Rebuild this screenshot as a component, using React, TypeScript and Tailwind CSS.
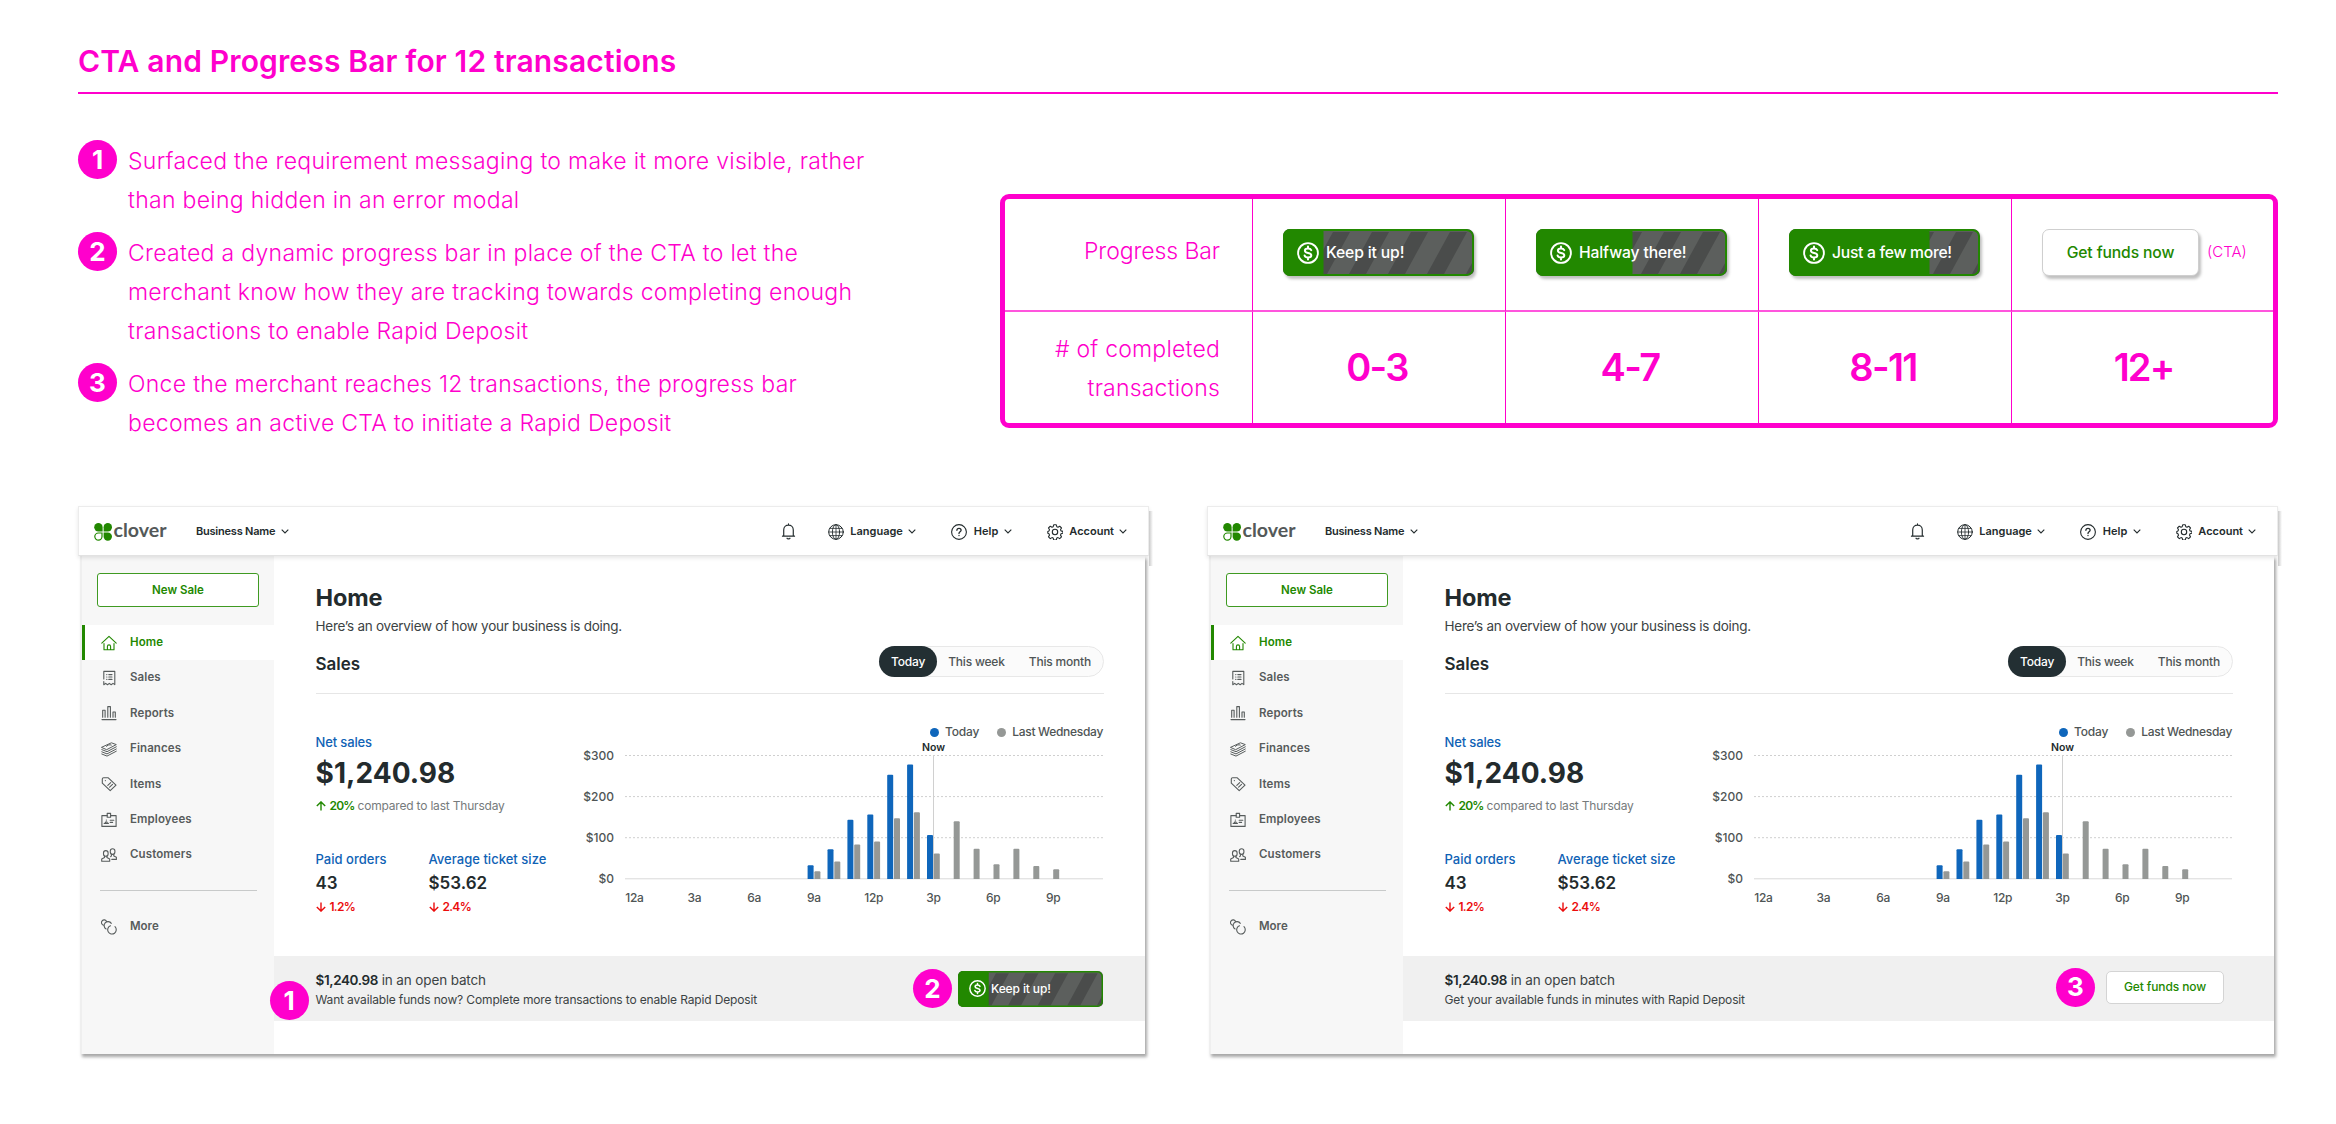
import type { ReactNode } from 'react';

type Variant = 'progress' | 'cta';

const annotations = [
  ['Surfaced the requirement messaging to make it more visible, rather', 'than being hidden in an error modal'],
  [
    'Created a dynamic progress bar in place of the CTA to let the',
    'merchant know how they are tracking towards completing enough',
    'transactions to enable Rapid Deposit',
  ],
  ['Once the merchant reaches 12 transactions, the progress bar', 'becomes an active CTA to initiate a Rapid Deposit'],
];

const progressSteps = [
  { label: 'Keep it up!', range: '0-3', fill: 40.5, tracking: 'tracking-[-0.009em]' },
  { label: 'Halfway there!', range: '4-7', fill: 96.5, tracking: 'tracking-[-0.009em]' },
  { label: 'Just a few more!', range: '8-11', fill: 140.5, tracking: 'tracking-[-0.018em]' },
];

// Heights in px on a $300 = 123px scale, one slot per hour starting at 9a
const hourlySales = [
  { today: 13.8, last: 7.8 },
  { today: 29.8, last: 17.5 },
  { today: 59.2, last: 34.4 },
  { today: 64.4, last: 37.4 },
  { today: 104.2, last: 60.8 },
  { today: 114.5, last: 66.8 },
  { today: 43.9, last: 25.5 },
  { today: 0, last: 57.8 },
  { today: 0, last: 30.2 },
  { today: 0, last: 14.8 },
  { today: 0, last: 30.2 },
  { today: 0, last: 13.1 },
  { today: 0, last: 9.8 },
];

const hourLabels = ['12a', '3a', '6a', '9a', '12p', '3p', '6p', '9p'];

function Icon({ children, size = 16 }: { children: ReactNode; size?: number }) {
  return (
    <svg
      width={size}
      height={size}
      viewBox="0 0 16 16"
      fill="none"
      stroke="currentColor"
      strokeWidth="1.1"
      strokeLinecap="round"
      strokeLinejoin="round"
      className="shrink-0"
    >
      {children}
    </svg>
  );
}

const navItems: { label: string; icon: ReactNode }[] = [
  {
    label: 'Home',
    icon: (
      <>
        <path d="M.8 8.2 8 1.3l7.2 6.9" />
        <path d="M3 8.5v6.3h10V8.5M6.4 14.6v-3.1a1.6 1.6 0 0 1 3.2 0v3.1" />
      </>
    ),
  },
  {
    label: 'Sales',
    icon: (
      <>
        <path d="M2.8 9V1.4h11v13.2l-1.8-1.2-1.8 1.3-1.9-1.3-1.8 1.3-1.8-1.3-1.9 1.3v-3.2" />
        <path d="M5.7 4.6h.2M7.8 4.6H11M5.7 7h.2M7.8 7H11M5.7 9.4h.2M7.8 9.4H11" />
      </>
    ),
  },
  {
    label: 'Reports',
    icon: (
      <>
        <path d="M1 14.6h14" />
        <path d="M1.7 12.3V5.2h2.4v7.1M6.8 12.3V1.6h2.6v10.7M12 12.3V7h2.3v5.3" />
      </>
    ),
  },
  {
    label: 'Finances',
    icon: (
      <g strokeWidth="1">
        <path d="M.8 6.2 10.4 1.8l4.9 1.8-9.3 4.9z" />
        <path d="M5.5 5.4c.2-1.2 3.2-2.2 4.8-1.4" />
        <path d="m.8 8.6 5.2 2.1 9.3-4.9M.8 10.8 6 12.9 15.3 8M.8 13 6 15.100l9.3-4.900" />
      </g>
    ),
  },
  {
    label: 'Items',
    icon: (
      <>
        <path d="M1.3 3v4.2l7.9 7.5 5.8-5.6-7.7-7.3H2.6A1.3 1.3 0 0 0 1.3 3z" />
        <path d="M4.3 4.6h.1M6.8 9.4l2.9-2.8M8.6 11.2 11.5 8.4" />
      </>
    ),
  },
  {
    label: 'Employees',
    icon: (
      <>
        <path d="M6.2 3.6H.9v10.8h14.2V3.6H9.8" />
        <path d="M6.2 1.4h3.4v3.8H6.2zM9.2 8.2h3.6M9.2 10.4h2.4" />
        <path d="M3.2 11.4h4.2M4.3 11c0-1 .3-1.2 1-1.2s1 .2 1 1.2M5.3 8.1h.1" />
      </>
    ),
  },
  {
    label: 'Customers',
    icon: (
      <>
        <rect x="2.5" y="3.6" width="4.6" height="5.6" rx="2.3" />
        <path d="M3.6 9v1.6L.7 12v2.2h8V12l-2.8-1.4V9" />
        <rect x="9.3" y="1.8" width="4.6" height="5.6" rx="2.3" />
        <path d="M10.4 7.4V9l-.8.6M12.8 7.4V9l2.6 1.2v2.2h-4.6" />
      </>
    ),
  },
];

const moreIcon = (
  <>
    <path d="M2.6 6.2A2.7 2.7 0 1 1 5.7 2.6" />
    <path d="M5.1 9.9A3.9 3.9 0 1 1 10.3 4.4" />
    <path d="M14 7.7A4.3 4.3 0 1 1 9.5 6.7" />
  </>
);

function Chevron() {
  return (
    <svg width="8" height="5" viewBox="0 0 8 5" fill="none" stroke="currentColor" strokeWidth="1.1" className="shrink-0">
      <path d="M.7.6 4 4 7.3.6" />
    </svg>
  );
}

function Arrow({ down = false }: { down?: boolean }) {
  return (
    <svg width="10" height="10" viewBox="0 0 10 10" fill="none" stroke="currentColor" strokeWidth="1.4" className="shrink-0">
      {down ? <path d="M5 .4v8.7M.8 5 5 9.1 9.2 5" /> : <path d="M5 9.6V.9M.8 5 5 .9 9.2 5" />}
    </svg>
  );
}

function Badge({ n }: { n: number }) {
  return (
    <span className="flex size-[39px] shrink-0 items-center justify-center rounded-full bg-[#ff00cc] text-[26px] leading-none font-bold text-white">
      {n}
    </span>
  );
}

function DollarIcon({ className }: { className: string }) {
  return (
    <svg viewBox="0 0 22 22" fill="none" stroke="currentColor" strokeLinecap="round" className={className}>
      <circle cx="11" cy="11" r="9.9" strokeWidth="1.9" />
      <path
        d="M14.2 8.2c-.5-1.1-1.7-1.7-3.2-1.7-1.8 0-3.1.8-3.1 2.2 0 3.2 6.4 1.4 6.4 4.6 0 1.4-1.5 2.2-3.3 2.2-1.7 0-3-.7-3.4-2M11 4.6v1.9M11 15.5v1.9"
        strokeWidth="2"
      />
    </svg>
  );
}

// Striped track with the completed share filled in green
function ProgressTrack({ fill }: { fill: number }) {
  return (
    <svg viewBox="0 0 191 47" preserveAspectRatio="none" className="absolute inset-0 h-full w-full">
      <rect width="191" height="47" fill="#5c5f5d" />
      {[0, 1, 2, 3, 4].map((i) => {
        const x = 50 + i * 39;
        return <polygon key={i} points={`${x},3 ${x + 17},3 ${x - 6},45 ${x - 23},45`} fill="#4a4c4b" />;
      })}
      <rect x="-6" width={fill + 6} height="47" rx="3" fill="#228800" />
      <rect x="1" y="1" width="189" height="45" rx="6.5" fill="none" stroke="#228800" strokeWidth="2" />
    </svg>
  );
}

function ComparisonTable() {
  return (
    <div className="mt-[100px] grid h-[234px] w-[1278px] grid-cols-[248px_253px_253px_253px_1fr] grid-rows-[113px_1fr] rounded-[9px] border-5 border-[#ff00cc] text-[#ff00cc]">
      <div className="border-r border-b-2 border-r-[#ff00cc] border-b-[#ff55dd] pt-[33px] pr-[32px] text-right text-[23px] leading-[39px] font-light tracking-[-0.004em]">
        Progress Bar
      </div>
      {progressSteps.map((step) => (
        <div key={step.range} className="border-r border-b-2 border-r-[#ff00cc] border-b-[#ff55dd] pt-[30px] pl-[30px]">
          <div className="relative flex h-[47px] w-[191px] items-center gap-[7px] overflow-hidden rounded-[7px] pl-[14px] text-white shadow-[2px_3px_3px_rgba(0,0,0,0.25)]">
            <ProgressTrack fill={step.fill} />
            <DollarIcon className="relative size-[22px]" />
            <span className={`relative text-[15.7px] font-medium whitespace-nowrap ${step.tracking}`}>{step.label}</span>
          </div>
        </div>
      ))}
      <div className="flex items-start gap-2 border-b-2 border-[#ff55dd] pt-[30px] pl-[30px]">
        <div className="flex h-[47px] w-[157px] items-center justify-center rounded-[7px] border border-[#cfcfcf] bg-white text-[15.7px] font-medium tracking-[-0.008em] whitespace-nowrap text-[#228800] shadow-[2px_3px_3px_rgba(0,0,0,0.25)]">
          Get funds now
        </div>
        <span className="text-[15px] leading-[46px] font-light">(CTA)</span>
      </div>
      <div className="border-r border-[#ff00cc] pt-[18px] pr-[32px] text-right text-[23px] leading-[39px] font-light tracking-[0.009em]">
        # of completed
        <br />
        transactions
      </div>
      {progressSteps.map((step) => (
        <div
          key={step.range}
          className="flex items-center justify-center border-r border-[#ff00cc] pr-[4px] text-[38px] font-semibold tracking-[-0.045em]"
        >
          {step.range}
        </div>
      ))}
      <div className="flex items-center justify-center text-[38px] font-semibold tracking-[-0.05em]">
        <span className="pl-[2px]">12+</span>
      </div>
    </div>
  );
}

function Logo() {
  return (
    <svg width="76" height="28" viewBox="0 -4 76 28" className="shrink-0 overflow-visible">
      <g fill="#228800">
        <path d="M4.4 1A4.2 4.2 0 0 0 4.4 9.4H8.600V5.200A4.200 4.200 0 0 0 4.400 1z" />
        <path d="M13.800 1A4.200 4.200 0 0 1 13.800 9.400H9.600V5.200A4.200 4.200 0 0 1 13.800 1z" />
        <path d="M13.800 18.800A4.200 4.200 0 0 0 13.800 10.400H9.600V14.600A4.200 4.200 0 0 0 13.800 18.800z" />
      </g>
      <path d="M4.400 18.200A3.600 3.600 0 0 1 4.400 11H8V14.600A3.600 3.600 0 0 1 4.400 18.200z" fill="none" stroke="#228800" strokeWidth="1.2" />
      <text x="19.5" y="15" textLength="53" lengthAdjust="spacingAndGlyphs" fill="#545959" className="font-[Lato] text-[19.5px] font-bold">
        clover
      </text>
    </svg>
  );
}

function TopBar() {
  return (
    <header className="relative z-10 flex h-[50px] items-center border border-[#ececec] border-b-[#e2e2e2] bg-white pt-px pr-[21px] pl-[15px] text-[11px] leading-none font-semibold text-[#232b2d] shadow-[0_2px_4px_rgba(0,0,0,0.1)]">
      <Logo />
      <div className="ml-[26px] flex items-center gap-[6px] tracking-[-0.02em]">
        Business Name
        <Chevron />
      </div>
      <div className="ml-auto flex items-center">
        <Icon size={17}>
          <path d="M2.3 12.4h11.4M3.5 12.4V6.5C3.5 3.8 5.5 2 8 2s4.500 1.800 4.500 4.500v5.900M8 2V.9M6.600 14.300c.3.9 2.500.9 2.800 0" />
        </Icon>
        <div className="ml-[31px] flex items-center">
          <Icon>
            <circle cx="8" cy="8" r="7.3" strokeWidth="1" />
            <ellipse cx="8" cy="8" rx="3.6" ry="7.3" strokeWidth=".9" />
            <path d="M8 .8v14.4M.8 8h14.4M1.8 4.4h12.4M1.8 11.6h12.4" strokeWidth=".8" />
          </Icon>
          <span className="mr-[5px] ml-[6px]">Language</span>
          <Chevron />
        </div>
        <div className="ml-[35px] flex items-center">
          <Icon>
            <circle cx="8" cy="8" r="7.4" />
            <path d="M5.9 6.3c0-1.2.9-2 2.1-2s2.1.8 2.1 1.9c0 1.5-2.1 1.6-2.1 3.2M8 11.5v.1" strokeWidth="1.3" />
          </Icon>
          <span className="mr-[6px] ml-[7px]">Help</span>
          <Chevron />
        </div>
        <div className="ml-[35px] flex items-center">
          <Icon>
            <circle cx="8" cy="8" r="2.7" />
            <path d="M6.7.8h2.600l.5 1.900 1.200.5 1.700-1 1.800 1.800-1 1.700.5 1.200 1.900.5v1.900l-1.900.5-.5 1.300 1 1.700-1.800 1.800-1.700-1-1.200.5-.5 1.900H6.700l-.5-1.900-1.200-.5-1.700 1-1.800-1.800 1-1.700-.5-1.300L.8 9.300V7.400l1.200-.5.5-1.200-1-1.700 1.800-1.800 1.700 1 1.200-.5z" />
          </Icon>
          <span className="mr-[5px] ml-[6px]">Account</span>
          <Chevron />
        </div>
      </div>
      <div className="absolute top-1 -right-[5px] h-[55px] w-1 bg-gradient-to-r from-[#c9c9c9] to-white" />
    </header>
  );
}

function Sidebar() {
  return (
    <aside className="w-[191.5px] shrink-0 bg-[#f7f7f7] pt-[17px] text-[11.5px] font-semibold text-[#575c5c]">
      <div className="ml-[15px] flex h-[34px] w-[162px] items-center justify-center rounded-[3px] border border-[#3f9a22] bg-white pt-px text-[#228800]">
        New Sale
      </div>
      <nav className="mt-[18px]">
        {navItems.map((item, i) => (
          <div
            key={item.label}
            className={`flex h-[35.4px] items-center gap-3 border-l-[3px] pl-4 tracking-[0.010em] ${
              i === 0 ? 'border-[#228800] bg-white text-[#228800]' : 'border-transparent'
            }`}
          >
            <Icon>{item.icon}</Icon>
            <span className="pl-px">{item.label}</span>
          </div>
        ))}
      </nav>
      <div className="mt-[17px] mr-[17px] ml-[18px] border-t border-[#c8caca]" />
      <div className="mt-[18px] flex h-[36px] items-center gap-3 pl-[19px]">
        <Icon>{moreIcon}</Icon>
        <span className="pl-px">More</span>
      </div>
    </aside>
  );
}

function SalesChart() {
  return (
    <svg width="521" height="166" viewBox="583 743 521 166" className="block font-[Inter] text-[12px] font-medium">
      {['$300', '$200', '$100', '$0'].map((label, i) => {
        const y = 756.5 + i * 41.1;
        return (
          <g key={label}>
            <text x="614" y={y + 4} textAnchor="end" fill="#4f5555">
              {label}
            </text>
            <line x1="625" x2="1103" y1={y} y2={y} stroke={i === 3 ? '#d9d9d9' : '#cfcfcf'} strokeDasharray={i === 3 ? undefined : '2 2'} />
          </g>
        );
      })}
      <line x1="933.5" x2="933.5" y1="756.5" y2="880" stroke="#d0d0d0" />
      <text x="933.5" y="752" textAnchor="middle" fill="#232b2d" className="text-[10.5px] font-semibold">
        Now
      </text>
      {hourlySales.map((hour, i) => {
        const x = 807.6 + i * 19.9;
        return (
          <g key={i}>
            {hour.today > 0 && (
              <path d={`M${x} 880v${-(hour.today - 1)}q0-1 1-1h4q1 0 1 1v${hour.today - 1}z`} fill="#0f66bb" />
            )}
            <path d={`M${x + 6.8} 880v${-(hour.last - 1)}q0-1 1-1h4q1 0 1 1v${hour.last - 1}z`} fill="#959896" />
          </g>
        );
      })}
      {hourLabels.map((label, i) => (
        <text key={label} x={634.5 + i * 59.8} y="902.5" textAnchor="middle" fill="#4f5555" letterSpacing="-0.3">
          {label}
        </text>
      ))}
    </svg>
  );
}

function Stats() {
  return (
    <div className="flex h-[262px] justify-between">
      <div className="pt-[39px] text-[13px] font-semibold">
        <div className="leading-[18px] font-medium tracking-[-0.011em] text-[#0f62b5]">Net sales</div>
        <div className="mt-[5px] text-[28px] leading-[34px] font-bold tracking-[0.002em] text-[#232b2d]">$1,240.98</div>
        <div className="mt-[8px] flex items-center gap-1 text-[12px] leading-4 text-[#228800]">
          <Arrow />
          <span className="w-[24px] tracking-[-0.07em]">20%</span>
          <span className="font-normal tracking-[-0.016em] text-[#767b7c]">compared to last Thursday</span>
        </div>
        <div className="mt-[36px] flex">
          {[
            ['Paid orders', '43', '1.2%'],
            ['Average ticket size', '$53.62', '2.4%'],
          ].map(([label, value, change]) => (
            <div key={label} className="w-[113px] whitespace-nowrap">
              <div className="leading-[18px] font-medium tracking-[0.002em] text-[#0f62b5]">{label}</div>
              <div className="mt-[5px] text-[17px] leading-5 text-[#232b2d]">{value}</div>
              <div className="mt-[6px] flex items-center gap-1 text-[12px] leading-4 tracking-[-0.060em] text-[#eb0d0d]">
                <Arrow down />
                {change}
              </div>
            </div>
          ))}
        </div>
      </div>
      <div className="pt-[30px]">
        <div className="flex items-center justify-end pr-px text-[12px] leading-4 font-medium text-[#4f5555]">
          <span className="mr-[6px] size-[9px] rounded-full bg-[#0f66bb]" />
          <span className="tracking-[-0.015em]">Today</span>
          <span className="mr-[6px] ml-[18px] size-[9px] rounded-full bg-[#959896]" />
          <span className="tracking-[-0.025em]">Last Wednesday</span>
        </div>
        <div className="mt-[2px]">
          <SalesChart />
        </div>
      </div>
    </div>
  );
}

function BatchBanner({ variant }: { variant: Variant }) {
  return (
    <div className="relative flex h-[65px] items-center bg-[#f0f0f0] pl-[42px] text-[#3c4344]">
      <div className="pt-[2px]">
        <div className="text-[13.5px] leading-5 tracking-[-0.010em]">
          <span className="font-semibold tracking-[-0.028em] text-[#232b2d]">$1,240.98</span> in an open batch
        </div>
        <div className="text-[12px] leading-5 tracking-[-0.012em]">
          {variant === 'progress'
            ? 'Want available funds now? Complete more transactions to enable Rapid Deposit'
            : 'Get your available funds in minutes with Rapid Deposit'}
        </div>
      </div>
      {variant === 'progress' ? (
        <div className="mr-[42px] ml-auto flex items-center gap-[6px]">
          <Badge n={2} />
          <div className="relative flex h-[36px] w-[145px] items-center gap-[5px] overflow-hidden rounded-[5px] pl-[11px] text-white">
            <ProgressTrack fill={40.5} />
            <DollarIcon className="relative size-[17px]" />
            <span className="relative text-[12px] font-medium tracking-[-0.010em]">Keep it up!</span>
          </div>
        </div>
      ) : (
        <div className="mr-[50px] mb-[3px] ml-auto flex items-center gap-[11px]">
          <Badge n={3} />
          <div className="flex h-[33px] w-[118px] items-center justify-center rounded-[5px] border border-[#d4d4d4] bg-white text-[12px] font-medium tracking-[-0.009em] text-[#228800]">
            Get funds now
          </div>
        </div>
      )}
      {variant === 'progress' && (
        <div className="absolute top-[25px] -left-[4px]">
          <Badge n={1} />
        </div>
      )}
    </div>
  );
}

function Dashboard({ variant }: { variant: Variant }) {
  return (
    <div className="w-[1071px]">
      <TopBar />
      <div className="mr-1 ml-[2px] flex h-[498px] border-l-2 border-[#efefef] bg-white shadow-[2px_3px_3px_rgba(0,0,0,0.35)]">
        <Sidebar />
        <main className="flex grow flex-col">
          <div className="pr-[41px] pl-[42px]">
            <h2 className="pt-[27px] text-[23.5px] leading-[30px] font-bold tracking-[-0.005em] text-[#232b2d]">Home</h2>
            <p className="mt-[4px] text-[13.5px] leading-[18px] tracking-[-0.019em] text-[#3c4344]">
              Here’s an overview of how your business is doing.
            </p>
            <div className="mt-[11px] flex items-center justify-between border-b border-[#e6e6e6] pb-4">
              <h3 className="pt-[4px] text-[17px] leading-5 font-semibold text-[#232b2d]">Sales</h3>
              <div className="flex h-[31px] items-center rounded-full border border-[#e8e8e8] bg-[#fbfbfb] text-[12px] font-medium tracking-[-0.016em] text-[#4f5555]">
                <span className="-ml-px flex h-[31px] w-[58px] items-center justify-center rounded-full bg-[#232f33] text-white">Today</span>
                <span className="ml-[11px]">This week</span>
                <span className="mr-[12px] ml-6">This month</span>
              </div>
            </div>
            <Stats />
          </div>
          <BatchBanner variant={variant} />
        </main>
      </div>
    </div>
  );
}

export default function App() {
  return (
    <div className="h-[1124px] w-[2336px] overflow-hidden bg-white pr-[58px] pl-[78px] font-[Inter,sans-serif]">
      <div className="h-[94px] border-b-2 border-[#ff00cc] pt-[46px]">
        <h1 className="text-[30px] leading-[31px] font-semibold tracking-[0.005em] text-[#ff00cc]">CTA and Progress Bar for 12 transactions</h1>
      </div>

      <div className="flex h-[412px] justify-between">
        <ol className="flex flex-col gap-[13px] pt-[46px]">
          {annotations.map((lines, i) => (
            <li key={i} className="flex gap-[11px]">
              <Badge n={i + 1} />
              <p className="-mb-px pt-[2px] text-[23px] leading-[39px] font-light tracking-[0.013em] whitespace-nowrap text-[#ff00cc]">
                {lines.map((line) => (
                  <span key={line} className="block">
                    {line}
                  </span>
                ))}
              </p>
            </li>
          ))}
        </ol>
        <ComparisonTable />
      </div>

      <div className="flex gap-[58px]">
        <Dashboard variant="progress" />
        <Dashboard variant="cta" />
      </div>
    </div>
  );
}
